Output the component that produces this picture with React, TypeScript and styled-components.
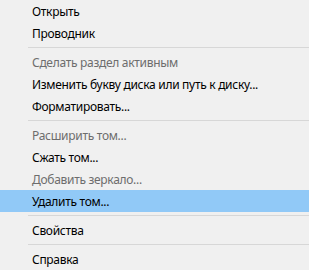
import React from "react";
import styled, { createGlobalStyle } from "styled-components";

const GlobalStyle = createGlobalStyle`
    html, body {
        margin: 0;
        padding: 0;
        background: #f0f0f0;
    }
`;

type Entry =
    | { kind: "item"; label: string; disabled?: boolean; active?: boolean }
    | { kind: "sep" };

const entries: Entry[] = [
    { kind: "item", label: "Открыть" },
    { kind: "item", label: "Проводник" },
    { kind: "sep" },
    { kind: "item", label: "Сделать раздел активным", disabled: true },
    { kind: "item", label: "Изменить букву диска или путь к диску..." },
    { kind: "item", label: "Форматировать..." },
    { kind: "sep" },
    { kind: "item", label: "Расширить том...", disabled: true },
    { kind: "item", label: "Сжать том..." },
    { kind: "item", label: "Добавить зеркало...", disabled: true },
    { kind: "item", label: "Удалить том...", active: true },
    { kind: "sep" },
    { kind: "item", label: "Свойства" },
    { kind: "sep" },
    { kind: "item", label: "Справка" },
];

export default function App() {
    return (
        <>
            <GlobalStyle />
            <Menu>
                {entries.map((e, i) =>
                    e.kind === "sep" ? (
                        <Separator key={i} />
                    ) : (
                        <Item key={i} $disabled={e.disabled} $active={e.active}>
                            {e.label}
                        </Item>
                    )
                )}
            </Menu>
        </>
    );
}

const Menu = styled.div`
    width: 309px;
    height: 270px;
    overflow: hidden;
    background: #f0f0f0;
    display: flex;
    flex-direction: column;
    font-family: "Noto Sans", "Open Sans", sans-serif;
    font-size: 12px;
    letter-spacing: -0.3px;
`;

const Item = styled.div<{ $disabled?: boolean; $active?: boolean }>`
    height: 22px;
    flex-shrink: 0;
    display: flex;
    align-items: center;
    padding-left: 32px;
    color: ${(p) => (p.$disabled ? "#6d6d6d" : "#000")};
    background: ${(p) => (p.$active ? "#91c9f7" : "transparent")};
    white-space: nowrap;
`;

const Separator = styled.div`
    height: 7px;
    flex-shrink: 0;
    margin-left: 28px;
    &::before {
        content: "";
        display: block;
        margin-top: 3px;
        height: 1px;
        background: #d7d7d7;
    }
`;
